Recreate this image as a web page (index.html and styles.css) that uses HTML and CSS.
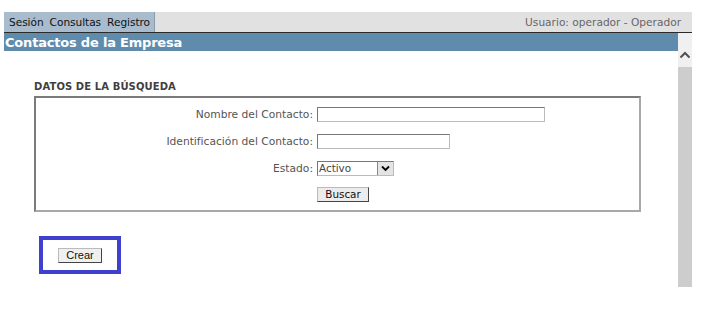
FILE: index.html
```html
<!DOCTYPE html>
<html lang="es">
<head>
<meta charset="utf-8">
<link rel="stylesheet" href="styles.css">
</head>
<body>
<div class="page">
  <div class="topbar">
    <div class="menu"><span>Sesión</span><span>Consultas</span><span>Registro</span></div>
    <div class="user">Usuario: operador - Operador</div>
  </div>
  <div class="frame">
    <div class="content">
      <div class="title">Contactos de la Empresa</div>
      <div class="body">
        <h2 class="section">DATOS DE LA BÚSQUEDA</h2>
        <div class="search">
          <div class="row"><label class="lbl">Nombre del Contacto:</label><span class="inp inp-long"></span></div>
          <div class="row"><label class="lbl">Identificación del Contacto:</label><span class="inp inp-mid"></span></div>
          <div class="row"><label class="lbl">Estado:</label><span class="select"><span class="sel-text">Activo</span><span class="sel-btn"><svg width="9" height="7" viewBox="0 0 9 7"><path d="M1 1.5 L4.5 5 L8 1.5" fill="none" stroke="#000" stroke-width="1.8"/></svg></span></span></div>
          <div class="row"><span class="lbl"></span><span class="btn btn-buscar">Buscar</span></div>
        </div>
        <div class="create-box"><span class="btn btn-crear">Crear</span></div>
      </div>
    </div>
    <div class="scrollbar">
      <div class="arrow"><svg width="14" height="12" viewBox="0 0 14 12"><path d="M2.5 8.5 L7 4 L11.5 8.5" fill="none" stroke="#505050" stroke-width="2"/></svg></div>
      <div class="thumb"></div>
    </div>
  </div>
</div>
</body>
</html>
```
FILE: styles.css
```css
html, body { margin: 0; padding: 0; background: #fff; }
body { font-family: "DejaVu Sans", Verdana, sans-serif; font-size: 11px; }
.page { padding: 12px 0 0 4px; width: 688px; }
.topbar {
  display: flex; height: 20px; background: #e1e1e1;
  border-bottom: 1px solid #2a2a2a;
}
.menu {
  display: flex; align-items: center; gap: 6px;
  background: #a8bccd; padding: 0 4px 0 5px; width: 141px;
  border-right: 1px solid #8a9aa8;
  font-size: 10.6px; color: #111; letter-spacing: -0.05px;
}
.user {
  flex: 1; display: flex; align-items: center; justify-content: flex-end;
  padding-right: 11px; color: #666; font-size: 10.6px;
}
.frame { display: flex; height: 254px; }
.content { flex: 1; }
.title {
  background: #5f8cad; color: #fff; font-weight: bold; font-size: 13px;
  height: 17px; line-height: 17px; padding: 1px 0 0 1px; letter-spacing: -0.2px;
}
.body { padding: 0 0 0 30px; }
.section {
  margin: 30px 0 0 0; font-size: 10px; font-weight: bold; color: #3f3f3f;
  line-height: 12px; letter-spacing: 0.1px;
}
.search {
  margin: 3px 0 0 0; width: 607px; height: 116px;
  border: 2px solid #8a8a8a; border-color: #7a7a7a #a8a8a8 #a8a8a8 #7a7a7a;
  padding-top: 3px; box-sizing: border-box;
}
.row { display: flex; align-items: center; height: 27px; }
.row:nth-child(3) { height: 27px; }
.row:nth-child(4) { height: 24px; }
.lbl {
  width: 277px; text-align: right; padding-right: 4px; color: #555;
  font-size: 10.7px;
}
.inp {
  display: inline-block; height: 15px; box-sizing: border-box;
  border: 1px solid #8a8a8a; border-color: #777 #bbb #bbb #777; background: #fff;
}
.inp-long { width: 228px; }
.inp-mid { width: 133px; }
.select {
  display: inline-flex; width: 77px; height: 15px; box-sizing: border-box;
  border: 1px solid #777; border-color: #777 #bbb #bbb #777; align-items: stretch;
}
.sel-text { flex: 1; font-size: 10.4px; line-height: 13px; padding-left: 1px; color: #444; }
.sel-btn {
  width: 15px; background: #e4e4e4; border-left: 1px solid #888;
  display: flex; align-items: center; justify-content: center;
}
.btn {
  display: inline-flex; align-items: center; justify-content: center;
  height: 15px; box-sizing: border-box; padding: 0 6px;
  background: #ececec; border: 1px solid #555; border-color: #bbb #444 #444 #bbb;
  font-size: 10.4px; color: #111;
}
.btn-buscar { width: 52px; padding: 0; }
.create-box {
  margin: 24px 0 0 5px; width: 82px; height: 38px; box-sizing: border-box;
  border: 4px solid #4040cf; display: flex; align-items: center; justify-content: center;
}
.btn-crear { font-family: "Liberation Sans", Arial, sans-serif; font-size: 11px; width: 44px; padding: 0; background: #f0f0f0; }
.scrollbar { width: 14px; background: #f0f0f0; display: flex; flex-direction: column; }
.arrow { height: 34px; box-sizing: border-box; padding-top: 16px; display: flex; align-items: flex-start; justify-content: center; }
.thumb { flex: 1; background: #cdcdcd; }
```
